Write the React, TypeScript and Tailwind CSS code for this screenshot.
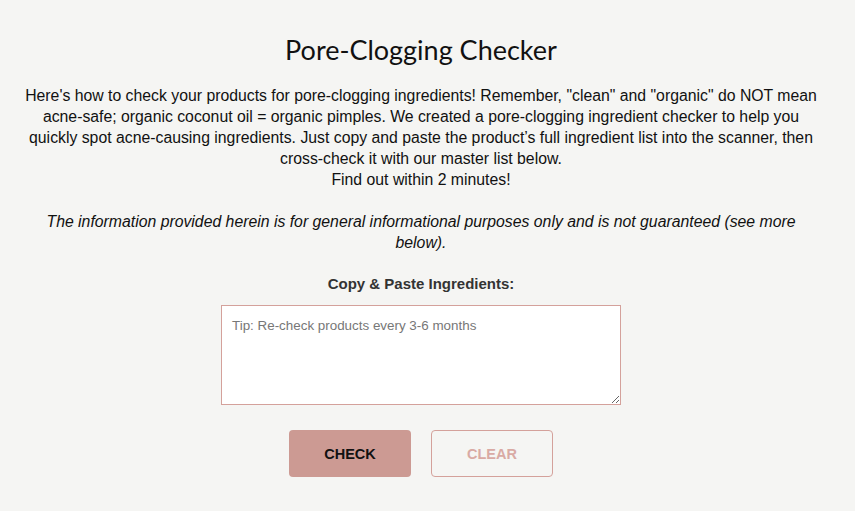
import { useState } from 'react';

const body = '"Liberation Sans", Arial, sans-serif';

export default function App() {
  const [text, setText] = useState('');

  return (
    <div className="min-h-[511px] w-full bg-[#f5f5f3]">
      <div className="w-[842px] flex flex-col items-center pt-[33px] text-[#111]" style={{ fontFamily: body }}>
        <h1 className="text-[27px] leading-[34px] text-[#111]" style={{ fontFamily: 'Lato, "Open Sans", sans-serif' }}>
          Pore-Clogging Checker
        </h1>

        <p className="mt-[18px] text-center text-[15.8px] leading-[21px] whitespace-nowrap">
          Here's how to check your products for pore-clogging ingredients! Remember, "clean" and "organic" do NOT mean
          <br />
          acne-safe; organic coconut oil = organic pimples. We created a pore-clogging ingredient checker to help you
          <br />
          quickly spot acne-causing ingredients. Just copy and paste the product’s full ingredient list into the scanner, then
          <br />
          cross-check it with our master list below.
          <br />
          Find out within 2 minutes!
        </p>

        <p className="mt-[21px] text-center text-[15.8px] leading-[21px] italic whitespace-nowrap">
          The information provided herein is for general informational purposes only and is not guaranteed (see more
          <br />
          below).
        </p>

        <label className="mt-[20px] text-[15px] leading-[22px] font-bold text-[#333]">Copy &amp; Paste Ingredients:</label>

        <textarea
          value={text}
          onChange={(e) => setText(e.target.value)}
          placeholder="Tip: Re-check products every 3-6 months"
          className="mt-[10px] w-[400px] h-[100px] bg-white border border-[#d4a19b] px-[10px] pt-[11px] pb-[8px] text-[13.4px] leading-[18px] outline-none placeholder:text-[#777]"
          style={{ fontFamily: body }}
        />

        <div className="mt-[25px] flex gap-[20px]">
          <button className="w-[122px] h-[47px] rounded-[4px] bg-[#cc9a93] pt-[2px] text-[14.5px] font-bold text-[#111]">
            CHECK
          </button>
          <button className="w-[122px] h-[47px] rounded-[4px] border border-[#d4a19b] pt-[2px] text-[14.5px] font-bold text-[#d9aaa4]">
            CLEAR
          </button>
        </div>
      </div>
    </div>
  );
}
